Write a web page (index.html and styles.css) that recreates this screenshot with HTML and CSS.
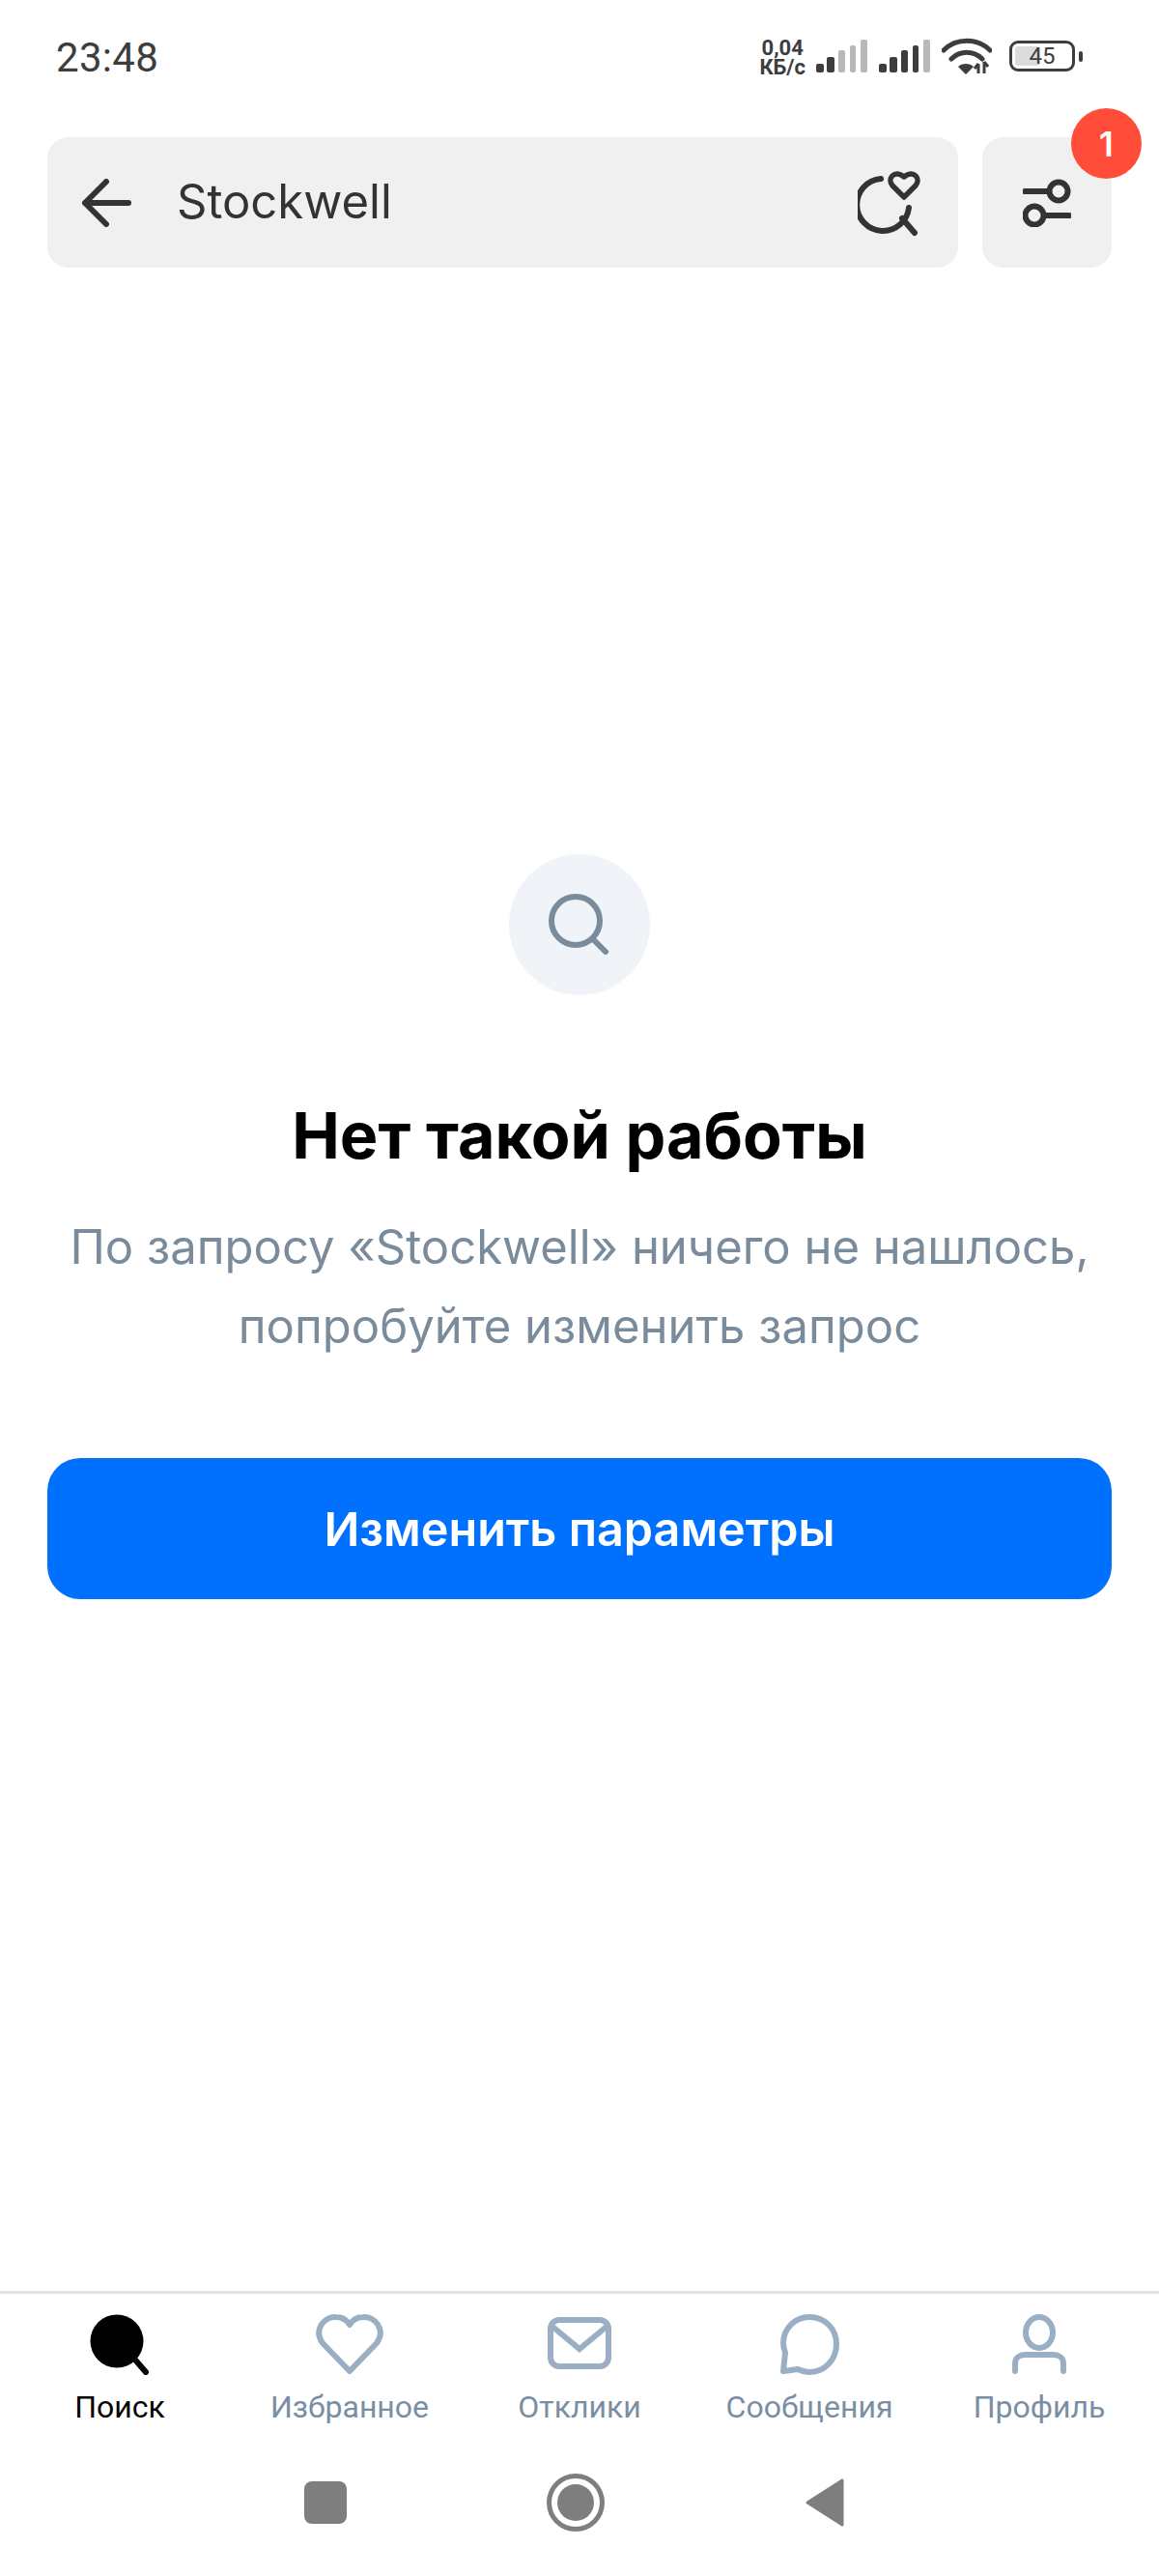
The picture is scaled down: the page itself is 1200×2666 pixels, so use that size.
FILE: index.html
```html
<!DOCTYPE html>
<html lang="ru">
<head>
  <meta charset="UTF-8" />
  <meta name="viewport" content="width=device-width, initial-scale=1.0"/>
  <title>Поиск</title>
  <link rel="stylesheet" href="styles.css">
</head>
<body>
  <div class="app">
    <div class="status-bar">
      <span class="time">23:48</span>
      <div class="status-icons">
        <div class="speed">
          <span>0,04</span>
          <span>КБ/с</span>
        </div>
        <svg class="signal" width="53" height="34" viewBox="0 0 53 34">
          <rect x="0" y="25" width="8" height="9" rx="2" fill="#3d3d3d"/>
          <rect x="11" y="18" width="8" height="16" rx="2" fill="#3d3d3d"/>
          <rect x="23" y="11" width="7" height="23" rx="2" fill="#b8b8b8"/>
          <rect x="35" y="6" width="6" height="28" rx="2" fill="#b8b8b8"/>
          <rect x="46" y="0" width="7" height="34" rx="2" fill="#b8b8b8"/>
        </svg>
        <svg class="signal" width="53" height="34" viewBox="0 0 53 34">
          <rect x="0" y="25" width="8" height="9" rx="2" fill="#3d3d3d"/>
          <rect x="11" y="18" width="8" height="16" rx="2" fill="#3d3d3d"/>
          <rect x="23" y="11" width="7" height="23" rx="2" fill="#3d3d3d"/>
          <rect x="35" y="6" width="6" height="28" rx="2" fill="#3d3d3d"/>
          <rect x="46" y="0" width="7" height="34" rx="2" fill="#b8b8b8"/>
        </svg>
        <svg class="wifi" width="52" height="38" viewBox="0 0 52 38">
          <path d="M2 13C15 0 37 0 50 13" fill="none" stroke="#3d3d3d" stroke-width="5" stroke-linecap="round"/>
          <path d="M10 22C19 13 33 13 42 22" fill="none" stroke="#3d3d3d" stroke-width="5" stroke-linecap="round"/>
          <path d="M17 30C21 26 29 26 33 30L25 38Z" fill="#3d3d3d"/>
          <path d="M38 27V37M34 32L38 27M44 25V37M44 25L48 30" fill="none" stroke="#3d3d3d" stroke-width="3"/>
        </svg>
        <div class="battery">
          <div class="battery-body">
            <span class="battery-fill"></span>
            <span class="battery-text">45</span>
          </div>
          <span class="battery-nub"></span>
        </div>
      </div>
    </div>

    <div class="search-row">
      <div class="search-box">
        <svg class="back-icon" width="52" height="50" viewBox="0 0 52 50">
          <path d="M49 25H4M26 3L4 25L26 47" fill="none" stroke="#333" stroke-width="6" stroke-linecap="round" stroke-linejoin="round"/>
        </svg>
        <span class="search-text">Stockwell</span>
        <svg class="fav-search" width="66" height="70" viewBox="0 0 66 70">
          <path d="M24 10A27 27 0 1 0 53 40" fill="none" stroke="#333" stroke-width="6" stroke-linecap="round"/>
          <path d="M46 51L59 66" fill="none" stroke="#333" stroke-width="6" stroke-linecap="round"/>
          <path d="M48 29L36 17C30 10 38 0 48 8C58 0 66 10 60 17Z" fill="none" stroke="#333" stroke-width="5.5" stroke-linejoin="round"/>
        </svg>
      </div>
      <div class="filter-btn">
        <svg width="50" height="50" viewBox="0 0 50 50">
          <path d="M2 13H27M24 38H48" fill="none" stroke="#333" stroke-width="6" stroke-linecap="round"/>
          <circle cx="37" cy="13" r="9.5" fill="none" stroke="#333" stroke-width="6"/>
          <circle cx="12" cy="38" r="9.5" fill="none" stroke="#333" stroke-width="6"/>
        </svg>
        <span class="badge">1</span>
      </div>
    </div>

    <div class="empty">
      <div class="empty-icon">
        <svg width="64" height="64" viewBox="0 0 64 64">
          <circle cx="28" cy="28" r="25" fill="none" stroke="#7a8b9c" stroke-width="6"/>
          <path d="M46 47L59 60" fill="none" stroke="#7a8b9c" stroke-width="6" stroke-linecap="round"/>
        </svg>
      </div>
      <h1 class="empty-title">Нет такой работы</h1>
      <p class="empty-text">По запросу «Stockwell» ничего не нашлось,<br>попробуйте изменить запрос</p>
      <button class="main-btn">Изменить параметры</button>
    </div>

    <div class="tabs">
      <div class="tab active">
        <svg width="64" height="64" viewBox="0 0 64 64">
          <circle cx="29" cy="29" r="27.5" fill="#000"/>
          <path d="M46 46L59 61" fill="none" stroke="#000" stroke-width="6" stroke-linecap="round"/>
        </svg>
        <span>Поиск</span>
      </div>
      <div class="tab">
        <svg width="70" height="64" viewBox="0 0 70 64">
          <path d="M35 60L7 31C-3 17 9 3 21 4C27 4 32 7 35 12C38 7 43 4 49 4C61 3 73 17 63 31Z" fill="none" stroke="#9aafc4" stroke-width="6" stroke-linejoin="round"/>
        </svg>
        <span>Избранное</span>
      </div>
      <div class="tab">
        <svg width="70" height="64" viewBox="0 0 70 64">
          <rect x="5" y="7" width="60" height="48" rx="9" fill="none" stroke="#9aafc4" stroke-width="6"/>
          <path d="M6 13L35 37L64 13" fill="none" stroke="#9aafc4" stroke-width="6"/>
        </svg>
        <span>Отклики</span>
      </div>
      <div class="tab">
        <svg width="64" height="64" viewBox="0 0 64 64">
          <path d="M32 4C17 4 5 16 5 31C5 35 6 38 7 41L5 60L20 58C24 60 28 61 32 61C48 61 60 48 60 32C60 16 48 4 32 4Z" fill="none" stroke="#9aafc4" stroke-width="6" stroke-linejoin="round"/>
        </svg>
        <span>Сообщения</span>
      </div>
      <div class="tab">
        <svg width="64" height="64" viewBox="0 0 64 64">
          <ellipse cx="32" cy="20" rx="14" ry="16" fill="none" stroke="#9aafc4" stroke-width="6"/>
          <path d="M7 60V52C7 46 12 43 17 43H47C52 43 57 46 57 52V60" fill="none" stroke="#9aafc4" stroke-width="6" stroke-linecap="round"/>
        </svg>
        <span>Профиль</span>
      </div>
    </div>

    <div class="sys-nav">
      <span class="sys-square"></span>
      <span class="sys-home"><span class="sys-home-dot"></span></span>
      <svg width="42" height="52" viewBox="0 0 42 52">
        <path d="M39 3V49L3 26Z" fill="#7e7e7e" stroke="#7e7e7e" stroke-width="3" stroke-linejoin="round"/>
      </svg>
    </div>
  </div>
</body>
</html>
```

FILE: styles.css
```css
* {
  box-sizing: border-box;
}
body {
  margin: 0;
  background: #fff;
  font-family: "Inter", sans-serif;
}
.app {
  display: flex;
  flex-direction: column;
  width: 1200px;
  height: 2666px;
}

/* status bar */
.status-bar {
  display: flex;
  justify-content: space-between;
  align-items: center;
  height: 118px;
  padding: 0 79px 0 58px;
  color: #3d3d3d;
}
.time {
  font-family: "Roboto", sans-serif;
  font-size: 42px;
  font-weight: 400;
  letter-spacing: 0.3px;
}
.status-icons {
  display: flex;
  align-items: center;
  gap: 12px;
  margin-top: -2px;
}
.speed {
  display: flex;
  flex-direction: column;
  margin: 3px -1px 0 0;
  font-family: "Roboto", sans-serif;
  font-size: 22px;
  font-weight: 700;
  line-height: 20px;
  text-align: center;
}
.battery {
  display: flex;
  align-items: center;
  gap: 4px;
  margin-left: 6px;
}
.battery-body {
  position: relative;
  display: flex;
  justify-content: center;
  align-items: center;
  width: 68px;
  height: 32px;
  border: 3px solid #3d3d3d;
  border-radius: 9px;
}
.battery-fill {
  position: absolute;
  left: 3px;
  top: 3px;
  bottom: 3px;
  width: 26px;
  background: #dcdcdc;
  border-radius: 3px;
}
.battery-text {
  position: relative;
  font-family: "Roboto", sans-serif;
  font-size: 24px;
  line-height: 1;
}
.battery-nub {
  width: 4px;
  height: 11px;
  background: #3d3d3d;
  border-radius: 2px;
}

/* search */
.search-row {
  display: flex;
  gap: 25px;
  padding: 24px 49px 0;
}
.search-box {
  display: flex;
  align-items: center;
  flex: 1;
  height: 135px;
  padding: 0 38px 0 35px;
  background: #f0f0f0;
  border-radius: 22px;
}
.search-text {
  flex: 1;
  margin-left: 47px;
  margin-bottom: 2px;
  font-size: 49px;
  color: #333;
}
.filter-btn {
  position: relative;
  display: flex;
  justify-content: center;
  align-items: center;
  width: 134px;
  height: 135px;
  background: #f0f0f0;
  border-radius: 22px;
}
.badge {
  position: absolute;
  top: -30px;
  right: -31px;
  display: flex;
  justify-content: center;
  align-items: center;
  width: 73px;
  height: 73px;
  background: #ff4d3a;
  border-radius: 50%;
  color: #fff;
  font-size: 35px;
  font-weight: 600;
}

/* empty state */
.empty {
  display: flex;
  flex-direction: column;
  align-items: center;
  flex: 1;
  padding: 607px 49px 0;
}
.empty-icon {
  display: flex;
  justify-content: center;
  align-items: center;
  width: 146px;
  height: 146px;
  background: #f0f4f9;
  border-radius: 50%;
}
.empty-title {
  margin: 106px 0 0;
  font-size: 66.4px;
  font-weight: 700;
  line-height: 78px;
  color: #000;
}
.empty-text {
  margin: 36px 0 0;
  font-size: 49px;
  line-height: 82px;
  text-align: center;
  color: #7a8b9c;
}
.main-btn {
  width: 100%;
  height: 146px;
  margin-top: 95px;
  background: #0070ff;
  border: none;
  border-radius: 34px;
  color: #fff;
  font-family: inherit;
  font-size: 48.5px;
  font-weight: 600;
}

/* bottom tabs */
.tabs {
  display: grid;
  grid-template-columns: repeat(5, 1fr);
  height: 154px;
  padding: 20px 5px 0;
  border-top: 3px solid #dce4ec;
}
.tab {
  display: flex;
  flex-direction: column;
  align-items: center;
  gap: 14px;
  font-family: "Roboto", sans-serif;
  font-size: 32px;
  color: #7a8ea3;
}
.tab.active {
  color: #000;
}
.sys-nav {
  display: flex;
  justify-content: center;
  align-items: center;
  gap: 207px;
  height: 141px;
  padding: 0 10px 12px 0;
}
.sys-square {
  width: 44px;
  height: 44px;
  background: #7e7e7e;
  border-radius: 8px;
}
.sys-home {
  display: flex;
  justify-content: center;
  align-items: center;
  width: 60px;
  height: 60px;
  border: 5px solid #7e7e7e;
  border-radius: 50%;
}
.sys-home-dot {
  width: 38px;
  height: 38px;
  background: #7e7e7e;
  border-radius: 50%;
}
```
